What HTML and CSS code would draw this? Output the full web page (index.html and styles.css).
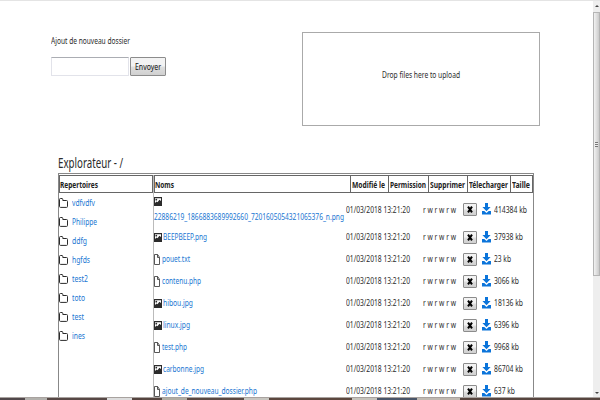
FILE: index.html
```html
<!DOCTYPE html>
<html lang="fr">
<head>
<meta charset="utf-8">
<title>Explorateur</title>
<link rel="stylesheet" href="styles.css">
</head>
<body>
<svg class="defs" aria-hidden="true">
  <symbol id="folder" viewBox="0 0 10 10"><path d="M.5 8.4V1.5Q.5 .5 1.4 .5H3Q3.8 .5 3.8 1.5V2.5H7.5Q8.5 2.5 8.5 3.4V8.5Q8.5 9.4 7.5 9.4H1.5Q.5 9.4 .5 8.4Z" fill="none" stroke="#2b2b2b" stroke-width="1"/></symbol>
  <symbol id="image" viewBox="0 0 8 9"><path d="M0 0H8V9H0Z" fill="#2b2b2b"/><path d="M1 1.2H7V4L5.4 2.8 3.5 5.3 2.5 4.6 1 6Z" fill="#fff"/><circle cx="2.3" cy="2.7" r=".9" fill="#2b2b2b"/></symbol>
  <symbol id="file" viewBox="0 0 6 11"><path d="M.5 .5H3.6L5.5 3.3V10.5H.5ZM3.5 .5V3.5H5.5" fill="none" stroke="#444" stroke-width=".9"/></symbol>
  <symbol id="download" viewBox="0 0 9 12"><path d="M3 0H6V4H8.6L4.5 8.3 .4 4H3ZM0 8H2.3L4.5 9.9 6.7 8H9V11.5H0Z" fill="#0b74da"/></symbol>
</svg>
<div class="window">
  <main class="page">
    <section class="tools">
      <form class="new-folder">
        <label><span class="fit" data-w="79">Ajout de nouveau dossier</span></label>
        <div class="controls"><input type="text"><button type="button" class="send"><span class="fit" data-w="26">Envoyer</span></button></div>
      </form>
      <div class="drop"><span class="fit" data-w="78">Drop files here to upload</span></div>
    </section>
    <h1><span class="fit" data-w="65">Explorateur - /</span></h1>
    <section class="explorer">
      <div class="folders">
        <div class="head"><span class="fit" data-w="38">Repertoires</span></div>
        <ul id="folders"></ul>
      </div>
      <div class="files">
        <div class="head cols">
          <div><span class="fit" data-w="19">Noms</span></div>
          <div><span class="fit" data-w="33">Modifié le</span></div>
          <div><span class="fit" data-w="36">Permission</span></div>
          <div><span class="fit" data-w="35">Supprimer</span></div>
          <div><span class="fit" data-w="39">Télecharger</span></div>
          <div><span class="fit" data-w="18">Taille</span></div>
        </div>
        <div id="files"></div>
      </div>
    </section>
  </main>
  <aside class="scrollbar"><i class="arrow up"></i><div class="thumb"><i class="grip"></i></div><i class="arrow down"></i></aside>
</div>
<footer class="taskbar"></footer>
<script src="script.js"></script>
</body>
</html>
```
FILE: styles.css
```css
* { box-sizing: border-box; }
body { margin: 0; width: 600px; height: 400px; overflow: hidden; background: #fff; color: #2c2c2c; font: 9.6px/12px "Noto Sans", "Open Sans", sans-serif; }
.defs { position: absolute; width: 0; height: 0; }
.window { display: flex; height: 397px; overflow: hidden; border-top: 1px solid #e4e4e4; }
.page { width: 593px; flex: none; }
.fit { display: inline-block; white-space: nowrap; transform-origin: 0 50%; }
.tools { display: flex; height: 153px; padding: 31px 0 0 51px; }
.new-folder { width: 251px; padding-top: 3px; }
.new-folder label { display: block; height: 12px; }
.controls { display: flex; gap: 1px; margin-top: 10px; }
input { width: 78px; height: 19px; padding: 0; border: 1px solid #e2e3ea; border-top-color: #abadb3; background: #fff; }
button { padding: 0; font: inherit; color: #111; border: 1px solid #8c8c8c; border-radius: 1px; background: linear-gradient(#f3f3f3 0 48%, #dedede 52%, #d0d0d0); display: flex; justify-content: center; align-items: center; }
.send { width: 36px; height: 19px; }
.drop { width: 238px; height: 94px; border: 1px solid #aaa; display: flex; justify-content: center; align-items: center; padding-bottom: 8px; }
h1 { margin: 0; height: 19px; padding-left: 58px; font-size: 13.5px; line-height: 19px; font-weight: 400; }
.explorer { display: flex; width: 476px; height: 300px; margin-left: 58px; border: 1px solid #888; padding-top: 1px; }
.folders { width: 95px; border-right: 1px solid #bbb; }
.files { width: 379px; }
.head { height: 18px; border: 1px solid #666; line-height: 17px; font-weight: 700; color: #222; }
.folders .head { width: 94px; }
.cols { padding: 0; display: grid; grid-template-columns: 195px 38px 40px 39px 43px 1fr; }
.cols div { padding-left: 1px; border-left: 1px solid #666; overflow: hidden; }
.cols div:first-child { border: 0; padding: 0; }
ul { list-style: none; margin: 0; padding: 1px 0 0; }
li { display: flex; height: 18.9px; align-items: center; }
li svg { width: 10px; height: 10px; margin-right: 3px; }
a { color: #1976d2; text-decoration: none; }
.row { display: grid; grid-template-columns: 192px 77px 40px 19px 12px 1fr; height: 22px; align-items: center; }
.row.tall { height: 33px; }
.name { display: flex; align-items: center; }
.tall .name { flex-direction: column; align-items: flex-start; }
.tall .name svg { margin: 0 0 5px; }
.image { width: 8px; height: 9px; margin: 0 1px 0 0; }
.file { width: 6px; height: 11px; margin: 0 2px 0 0; }
.download { display: block; width: 9px; height: 12px; margin-top: -1px; }
.delete { width: 14px; height: 13px; }
.delete svg { width: 6px; height: 7px; }
.scrollbar { width: 7px; height: 397px; background: #eee; display: flex; flex-direction: column; align-items: center; }
.thumb { width: 7px; height: 264px; border: 1px solid #b5b5b5; background: linear-gradient(90deg, #f2f2f2, #ccc); display: flex; align-items: center; justify-content: center; }
.grip { width: 3px; height: 5px; background: repeating-linear-gradient(#777 0 1px, #eee 1px 2px); }
.arrow { width: 0; height: 0; border: 2px solid transparent; }
.up { border-bottom-color: #444; margin: 2px 0 5px; }
.down { border-top-color: #444; margin-top: auto; margin-bottom: 2px; }
.taskbar { height: 3px; border-top: 1px solid #a8a29f; background: linear-gradient(90deg, #51484a 0 25px, #b3b1ad 25px 47px, #574845 47px 107px, #ddd 107px 132px, #55443f 132px 162px, #b0aca2 162px 187px, #5a4842 187px 244px, #c8c6c0 244px 269px, #5c473e 269px 352px, #c5c2bb 352px 377px, #4a5568 377px 417px, #c0b9b1 417px 460px, #57453f 460px); }
```
FILE: script.js
```js
const icon = (id, cls = id) => `<svg class="${cls}"><use href="#${id}"/></svg>`;
const fit = (text, w) => `<span class="fit" data-w="${w}">${text}</span>`;
const folders = [["vdfvdfv", 23], ["Philippe", 25], ["ddfg", 15], ["hgfds", 18], ["test2", 16], ["toto", 13], ["test", 12], ["ines", 13]];
const files = [
  ["image", "22886219_1866883689992660_7201605054321065376_n.png", 190, "414384 kb", 33],
  ["image", "BEEPBEEP.png", 44, "37938 kb", 29],
  ["file", "pouet.txt", 28, "23 kb", 17],
  ["file", "contenu.php", 39, "3066 kb", 25],
  ["image", "hibou.jpg", 30, "18136 kb", 29],
  ["image", "linux.jpg", 27, "6396 kb", 25],
  ["file", "test.php", 25, "9968 kb", 25],
  ["image", "carbonne.jpg", 41, "86704 kb", 29],
  ["file", "ajout_de_nouveau_dossier.php", 95, "637 kb", 21]
];
const cross = '<svg viewBox="0 0 6 7"><path d="M1 .7 5 6.3M5 .7 1 6.3" stroke="#000" stroke-width="2"/></svg>';
document.getElementById("folders").innerHTML = folders
  .map(([n, w]) => `<li>${icon("folder")}<a>${fit(n, w)}</a></li>`).join("");
document.getElementById("files").innerHTML = files.map(([type, name, w, size, sw], i) =>
  `<div class="row${i ? "" : " tall"}"><div class="name">${icon(type)}<a>${fit(name, w)}</a></div>` +
  `<div>${fit("01/03/2018 13:21:20", 64)}</div><div>${fit("r w r w r w", 33)}</div>` +
  `<button type="button" class="delete">${cross}</button>${icon("download")}<div>${fit(size, sw)}</div></div>`).join("");

document.querySelectorAll(".fit").forEach(el => {
  const natural = el.getBoundingClientRect().width;
  const w = Number(el.dataset.w);
  el.style.width = `${w}px`;
  el.innerHTML = `<span class="fit" style="transform:scaleX(${w / natural})">${el.textContent}</span>`;
});
```
